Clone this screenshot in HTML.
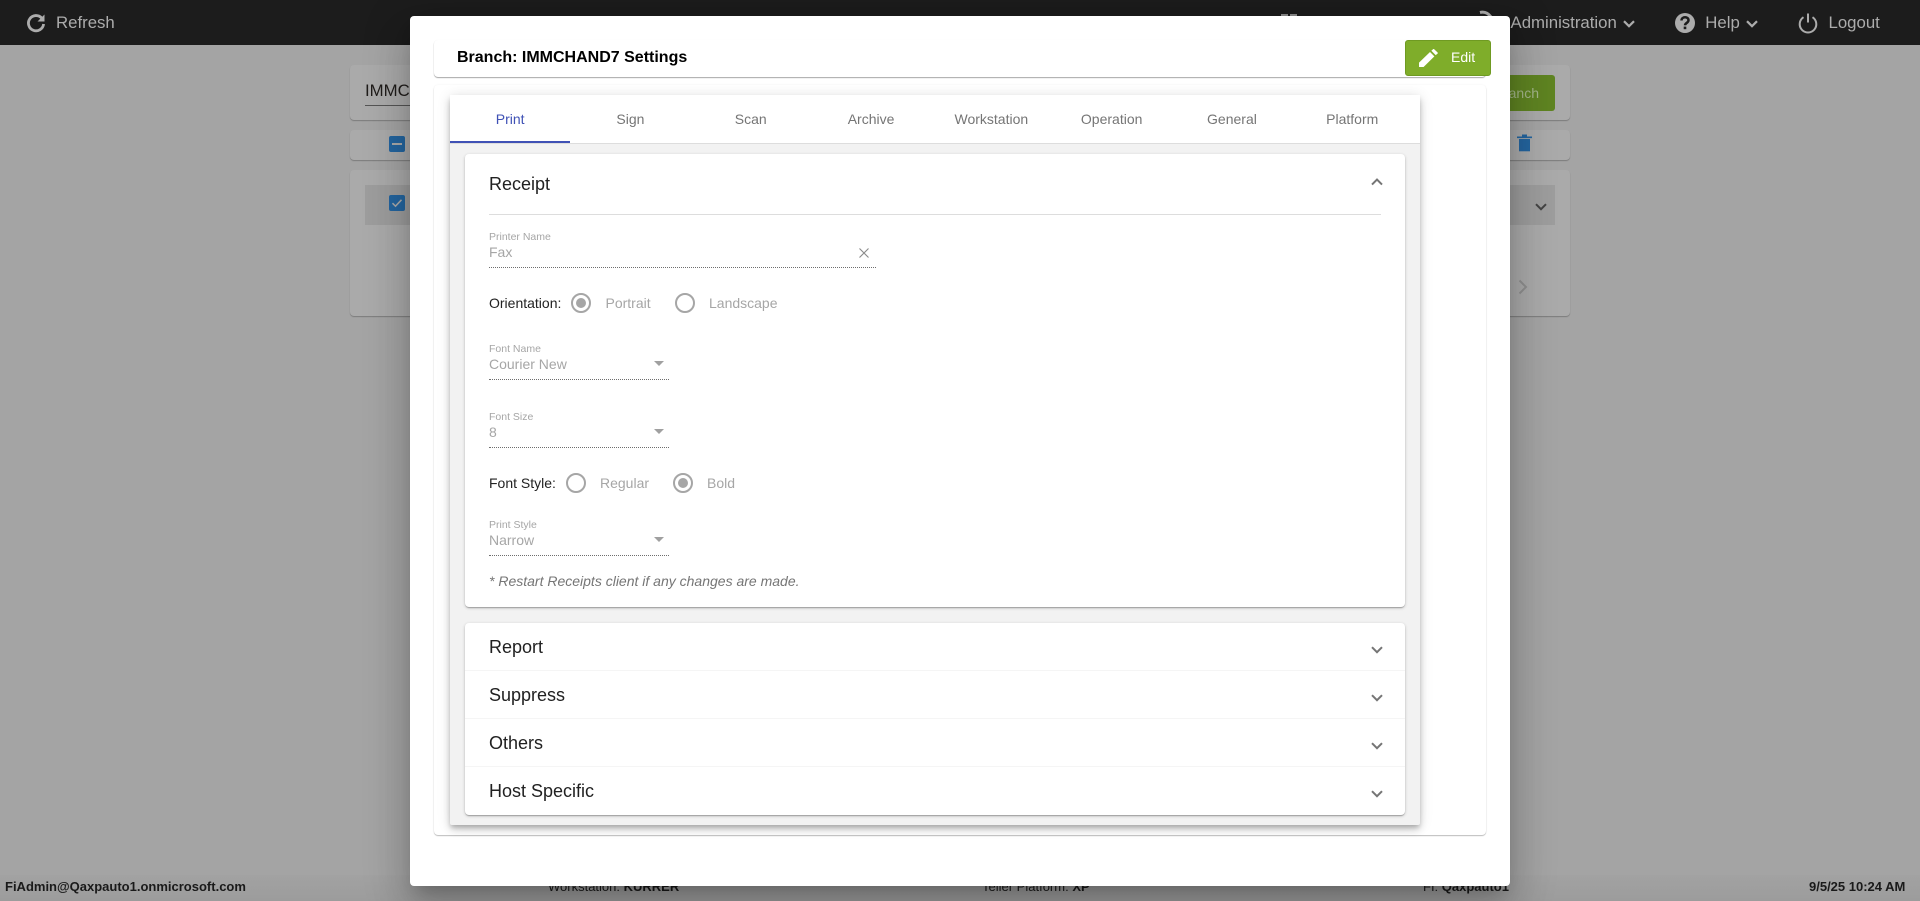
<!DOCTYPE html>
<html><head><meta charset="utf-8"><title>Branch Settings</title>
<style>
html,body{margin:0;padding:0;width:1920px;height:901px;overflow:hidden;background:#a4a4a4;font-family:"Liberation Sans",Arial,sans-serif}
.a{position:absolute}
.t{position:absolute;white-space:nowrap;line-height:20px;height:20px}
.bcard{position:absolute;background:#aaa;border-radius:4px;box-shadow:0 1px 1px rgba(0,0,0,.25)}
.nav{color:#acacac;font-size:16.8px}
svg{position:absolute;overflow:visible}
#modal{position:absolute;left:410px;top:16px;width:1100px;height:870px;background:#fff;border-radius:4px;box-shadow:0 11px 15px -7px rgba(0,0,0,.2),0 24px 38px 3px rgba(0,0,0,.14),0 9px 46px 8px rgba(0,0,0,.12)}
.card{position:absolute;background:#fff;border-radius:4px}
.tab{position:absolute;top:95px;width:120.3px;height:48px;text-align:center;font-size:14px;line-height:48px;color:#757575}
.lab{position:absolute;left:489px;font-size:10.5px;color:#a6a6a6;white-space:nowrap;line-height:12px}
.val{position:absolute;left:489px;font-size:14px;color:#a6a6a6;white-space:nowrap;line-height:18px}
.ul{position:absolute;left:489px;height:0;border-bottom:1px dotted #6e6e6e}
.arr{position:absolute;width:0;height:0;border-left:5px solid transparent;border-right:5px solid transparent;border-top:5px solid #a0a0a0}
.blk{position:absolute;left:489px;font-size:14px;color:#222;line-height:20px;white-space:nowrap}
.gr{position:absolute;font-size:14px;color:#a6a6a6;line-height:20px;white-space:nowrap}
.rad{position:absolute;width:16px;height:16px;border:2px solid #a6a6a6;border-radius:50%}
.rad.on::after{content:"";position:absolute;left:3px;top:3px;width:10px;height:10px;background:#a6a6a6;border-radius:50%}
.h{position:absolute;left:489px;font-size:18px;color:#212121;line-height:24px;white-space:nowrap}
.f{position:absolute;top:878px;font-size:13px;line-height:18px;color:#1a1a1a;white-space:nowrap}
</style></head><body>

<!-- top bar -->
<div class="a" style="left:0;top:0;width:1920px;height:45px;background:#1c1c1c"></div>
<svg style="left:26px;top:13px" width="20" height="20" viewBox="0 0 20 20"><path d="M15.8 5.2A7.6 7.6 0 1 0 17.6 11" fill="none" stroke="#acacac" stroke-width="2.8"/><path d="M18.5 1.5V8.5h-7z" fill="#acacac"/></svg>
<div class="t nav" style="left:56px;top:13px">Refresh</div>
<div class="a" style="left:1281px;top:14px;width:7px;height:2px;background:#8a8a8a"></div>
<div class="a" style="left:1290px;top:14px;width:7px;height:2px;background:#8a8a8a"></div>
<svg style="left:1478px;top:10px" width="16" height="8"><path d="M2 2.5C6 1.5 10 3 13 7" fill="none" stroke="#acacac" stroke-width="3"/></svg>
<div class="t nav" style="left:1510.5px;top:13px">Administration</div>
<svg style="left:1623px;top:20px" width="12" height="8"><path d="M1 1.2l5 5 5-5" fill="none" stroke="#acacac" stroke-width="2.2"/></svg>
<svg style="left:1675px;top:13px" width="20" height="20" viewBox="0 0 20 20"><circle cx="10" cy="10" r="10" fill="#acacac"/><path d="M6.5 7.5C6.6 3.3 13.5 3.2 13.5 7.3c0 2.7-3.4 2.5-3.5 5" fill="none" stroke="#1c1c1c" stroke-width="2.5"/><rect x="8.7" y="13.6" width="2.6" height="2.6" fill="#1c1c1c"/></svg>
<div class="t nav" style="left:1705.3px;top:13px">Help</div>
<svg style="left:1746px;top:20px" width="12" height="8"><path d="M1 1.2l5 5 5-5" fill="none" stroke="#acacac" stroke-width="2.2"/></svg>
<svg style="left:1798px;top:13px" width="20" height="20" viewBox="0 0 20 20"><path d="M5.5 4.2a8.3 8.3 0 1 0 9 0" fill="none" stroke="#acacac" stroke-width="2"/><path d="M10 0.5v9" fill="none" stroke="#acacac" stroke-width="2"/></svg>
<div class="t nav" style="left:1828.5px;top:13px">Logout</div>

<!-- background content -->
<div class="bcard" style="left:350px;top:65px;width:1220px;height:55px"></div>
<div class="t" style="left:365px;top:81px;font-size:16.8px;color:#1f1c1a">IMMCHAND7</div>
<div class="a" style="left:365px;top:105px;width:300px;height:1px;background:#555"></div>
<div class="a" style="left:1400px;top:75px;width:155px;height:36px;background:#5f8422;border-radius:3px"></div>
<div class="t" style="left:1450px;top:83px;font-size:14px;width:89px;text-align:right;color:#a3b58a">Branch</div>
<div class="bcard" style="left:350px;top:130px;width:1220px;height:30px"></div>
<div class="a" style="left:389px;top:136px;width:16px;height:16px;background:#24659f;border-radius:2px"></div>
<div class="a" style="left:392px;top:143px;width:10px;height:2px;background:#aaa"></div>
<svg style="left:1517px;top:134px" width="16" height="18" viewBox="0 0 16 18"><path d="M0 2.5h15v1.6H0zM5 0.5h5V2.5H5z" fill="#24659f"/><path d="M2 5h11v12.3H2z" fill="#24659f"/></svg>
<div class="bcard" style="left:350px;top:170px;width:1220px;height:146px"></div>
<div class="a" style="left:365px;top:185px;width:1190px;height:40px;background:#9d9d9d"></div>
<div class="a" style="left:389px;top:195px;width:16px;height:16px;background:#24659f;border-radius:2px"></div>
<svg style="left:389px;top:195px" width="16" height="16"><path d="M3.5 8.2l3 3 6-6.4" fill="none" stroke="#aaa" stroke-width="1.5"/></svg>
<svg style="left:1535px;top:203px" width="12" height="8"><path d="M1 1.2l5 5 5-5" fill="none" stroke="#444" stroke-width="2"/></svg>
<svg style="left:1518px;top:279px" width="10" height="16"><path d="M1.5 1.5l6.5 6.5-6.5 6.5" fill="none" stroke="#8f8f8f" stroke-width="2"/></svg>

<!-- footer -->
<div class="a" style="left:0;top:875px;width:1920px;height:26px;background:linear-gradient(#a2a2a2,#9c9c9c)"></div>
<div class="f" style="left:5px;font-weight:bold">FiAdmin@Qaxpauto1.onmicrosoft.com</div>
<div class="f" style="left:548px">Workstation: <b>KURRER</b></div>
<div class="f" style="left:982px">Teller Platform: <b>XP</b></div>
<div class="f" style="left:1423px">FI: <b>Qaxpauto1</b></div>
<div class="f" style="left:1809px;font-weight:bold">9/5/25 10:24 AM</div>

<!-- modal -->
<div id="modal"></div>
<div class="card" style="left:434px;top:40px;width:1052px;height:37px;box-shadow:0 1px 1px rgba(0,0,0,.35),0 0 1px rgba(0,0,0,.06)"></div>
<div class="t" style="left:457px;top:48px;font-size:16px;font-weight:bold;color:#000">Branch: IMMCHAND7 Settings</div>
<div class="a" style="left:1405px;top:40px;width:84px;height:34px;background:#7fad2a;border:1px solid #6f9a22;border-radius:3px"></div>
<svg style="left:1419px;top:49px" width="19" height="18" viewBox="0 0 20 19"><path d="M0 19V14.4L11.6 3.2l4.6 4.6L4.8 19zM13 1.9L14.8 .2c.4-.3.9-.3 1.2 0l3.6 3.5c.3.3.3.8 0 1.2l-2 1.5z" fill="#fff"/></svg>
<div class="t" style="left:1451px;top:47px;font-size:14px;color:#fff">Edit</div>

<div class="card" style="left:434px;top:85px;width:1052px;height:750px;box-shadow:0 1px 1px rgba(0,0,0,.25),0 0 2px rgba(0,0,0,.05)"></div>
<div class="a" style="left:450px;top:95px;width:970px;height:730px;background:#f2f2f2;border-radius:2px;box-shadow:0 3px 5px -1px rgba(0,0,0,.2),0 5px 8px 0 rgba(0,0,0,.14),0 1px 14px 0 rgba(0,0,0,.12)"></div>
<div class="a" style="left:450px;top:95px;width:970px;height:48px;background:#fff;border-bottom:1px solid #ddd"></div>
<div class="a" style="left:450px;top:141px;width:120px;height:2px;background:#3f51b5"></div>
<div class="tab" style="left:450px;color:#3f51b5">Print</div>
<div class="tab" style="left:570.3px">Sign</div>
<div class="tab" style="left:690.6px">Scan</div>
<div class="tab" style="left:810.9px">Archive</div>
<div class="tab" style="left:931.2px">Workstation</div>
<div class="tab" style="left:1051.5px">Operation</div>
<div class="tab" style="left:1171.8px">General</div>
<div class="tab" style="left:1292.1px">Platform</div>

<div class="card" style="left:465px;top:154px;width:940px;height:453px;box-shadow:0 1px 3px rgba(0,0,0,.2),0 1px 1px rgba(0,0,0,.14),0 2px 1px -1px rgba(0,0,0,.12)"></div>
<div class="h" style="top:172px">Receipt</div>
<svg style="left:1371px;top:178px" width="12" height="8"><path d="M1 6.6l5-5 5 5" fill="none" stroke="#757575" stroke-width="2"/></svg>
<div class="a" style="left:489px;top:214px;width:892px;height:1px;background:#ddd"></div>

<div class="lab" style="top:231px">Printer Name</div>
<div class="val" style="top:243px">Fax</div>
<svg style="left:858px;top:247px" width="12" height="12"><path d="M1.5 1.5l9 9M10.5 1.5l-9 9" stroke="#8a8a8a" stroke-width="1.1" fill="none"/></svg>
<div class="ul" style="top:267px;width:387px"></div>

<div class="blk" style="top:293px">Orientation:</div>
<div class="rad on" style="left:571px;top:293px"></div>
<div class="gr" style="left:605.5px;top:293px">Portrait</div>
<div class="rad" style="left:675px;top:293px"></div>
<div class="gr" style="left:709px;top:293px">Landscape</div>

<div class="lab" style="top:343px">Font Name</div>
<div class="val" style="top:355px">Courier New</div>
<div class="arr" style="left:654px;top:361px"></div>
<div class="ul" style="top:379px;width:180px"></div>

<div class="lab" style="top:411px">Font Size</div>
<div class="val" style="top:423px">8</div>
<div class="arr" style="left:654px;top:429px"></div>
<div class="ul" style="top:447px;width:180px"></div>

<div class="blk" style="top:473px">Font Style:</div>
<div class="rad" style="left:566px;top:473px"></div>
<div class="gr" style="left:600px;top:473px">Regular</div>
<div class="rad on" style="left:673px;top:473px"></div>
<div class="gr" style="left:707px;top:473px">Bold</div>

<div class="lab" style="top:519px">Print Style</div>
<div class="val" style="top:531px">Narrow</div>
<div class="arr" style="left:654px;top:537px"></div>
<div class="ul" style="top:555px;width:180px"></div>

<div class="gr" style="left:489px;top:571px;font-style:italic;color:#757575">* Restart Receipts client if any changes are made.</div>

<div class="card" style="left:465px;top:623px;width:940px;height:192px;box-shadow:0 1px 3px rgba(0,0,0,.2),0 1px 1px rgba(0,0,0,.14),0 2px 1px -1px rgba(0,0,0,.12)"></div>
<div class="a" style="left:465px;top:670px;width:940px;height:1px;background:#f5f5f5"></div>
<div class="a" style="left:465px;top:718px;width:940px;height:1px;background:#f5f5f5"></div>
<div class="a" style="left:465px;top:766px;width:940px;height:1px;background:#f5f5f5"></div>
<div class="h" style="top:635px">Report</div>
<div class="h" style="top:683px">Suppress</div>
<div class="h" style="top:731px">Others</div>
<div class="h" style="top:779px">Host Specific</div>
<svg style="left:1371px;top:646px" width="12" height="8"><path d="M1 1.2l5 5 5-5" fill="none" stroke="#757575" stroke-width="2"/></svg>
<svg style="left:1371px;top:694px" width="12" height="8"><path d="M1 1.2l5 5 5-5" fill="none" stroke="#757575" stroke-width="2"/></svg>
<svg style="left:1371px;top:742px" width="12" height="8"><path d="M1 1.2l5 5 5-5" fill="none" stroke="#757575" stroke-width="2"/></svg>
<svg style="left:1371px;top:790px" width="12" height="8"><path d="M1 1.2l5 5 5-5" fill="none" stroke="#757575" stroke-width="2"/></svg>
</body></html>
